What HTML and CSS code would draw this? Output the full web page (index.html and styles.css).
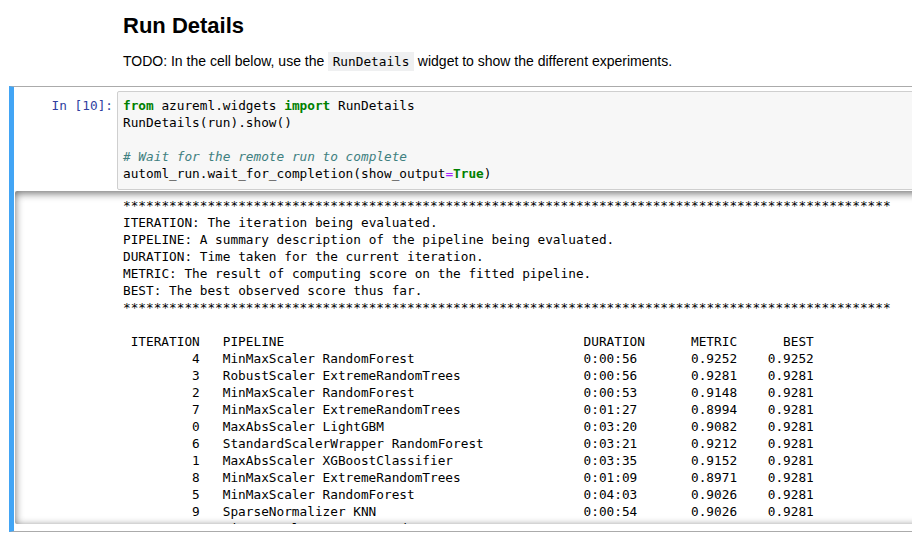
FILE: index.html
```html
<!DOCTYPE html>
<html lang="en">
<head>
<meta charset="utf-8">
<title>Run Details</title>
<link rel="stylesheet" href="styles.css">
</head>
<body>
<div class="notebook">
  <div class="text-cell">
    <h2>Run Details</h2>
    <p>TODO: In the cell below, use the <code>RunDetails</code> widget to show the different experiments.</p>
  </div>
  <div class="code-cell">
    <div class="input">
      <div class="prompt">In&nbsp;[10]:</div>
      <pre class="input-area"><span class="kw">from</span> azureml.widgets <span class="kw">import</span> RunDetails
RunDetails(run).show()

<span class="cm"># Wait for the remote run to complete</span>
automl_run.wait_for_completion(show_output<span class="op">=</span><span class="kc">True</span>)</pre>
    </div>
    <div class="output-scroll">
      <div class="output-prompt"></div>
      <div class="output-body">
<pre class="output-text">****************************************************************************************************
ITERATION: The iteration being evaluated.
PIPELINE: A summary description of the pipeline being evaluated.
DURATION: Time taken for the current iteration.
METRIC: The result of computing score on the fitted pipeline.
BEST: The best observed score thus far.
****************************************************************************************************</pre>
        <div class="results">
          <span class="c-it">ITERATION</span><span class="c-pl">PIPELINE</span><span class="c-du">DURATION</span><span class="c-me">METRIC</span><span class="c-be">BEST</span>
          <span class="c-it">4</span><span class="c-pl">MinMaxScaler RandomForest</span><span class="c-du">0:00:56</span><span class="c-me">0.9252</span><span class="c-be">0.9252</span>
          <span class="c-it">3</span><span class="c-pl">RobustScaler ExtremeRandomTrees</span><span class="c-du">0:00:56</span><span class="c-me">0.9281</span><span class="c-be">0.9281</span>
          <span class="c-it">2</span><span class="c-pl">MinMaxScaler RandomForest</span><span class="c-du">0:00:53</span><span class="c-me">0.9148</span><span class="c-be">0.9281</span>
          <span class="c-it">7</span><span class="c-pl">MinMaxScaler ExtremeRandomTrees</span><span class="c-du">0:01:27</span><span class="c-me">0.8994</span><span class="c-be">0.9281</span>
          <span class="c-it">0</span><span class="c-pl">MaxAbsScaler LightGBM</span><span class="c-du">0:03:20</span><span class="c-me">0.9082</span><span class="c-be">0.9281</span>
          <span class="c-it">6</span><span class="c-pl">StandardScalerWrapper RandomForest</span><span class="c-du">0:03:21</span><span class="c-me">0.9212</span><span class="c-be">0.9281</span>
          <span class="c-it">1</span><span class="c-pl">MaxAbsScaler XGBoostClassifier</span><span class="c-du">0:03:35</span><span class="c-me">0.9152</span><span class="c-be">0.9281</span>
          <span class="c-it">8</span><span class="c-pl">MinMaxScaler ExtremeRandomTrees</span><span class="c-du">0:01:09</span><span class="c-me">0.8971</span><span class="c-be">0.9281</span>
          <span class="c-it">5</span><span class="c-pl">MinMaxScaler RandomForest</span><span class="c-du">0:04:03</span><span class="c-me">0.9026</span><span class="c-be">0.9281</span>
          <span class="c-it">9</span><span class="c-pl">SparseNormalizer KNN</span><span class="c-du">0:00:54</span><span class="c-me">0.9026</span><span class="c-be">0.9281</span>
          <span class="c-it">10</span><span class="c-pl">MinMaxScaler ExtremeRandomTrees</span><span class="c-du">0:00:58</span><span class="c-me">0.9143</span><span class="c-be">0.9281</span>
        </div>
      </div>
    </div>
  </div>
</div>
</body>
</html>
```
FILE: styles.css
```css
html, body {
  margin: 0;
  padding: 0;
  background: #fff;
  overflow: hidden;
}
body {
  width: 912px;
  height: 534px;
  font-family: "Liberation Sans", Arial, sans-serif;
  color: #000;
}
.text-cell {
  padding: 13px 0 0 123px;
}
.text-cell h2 {
  margin: 0;
  font-size: 22px;
  line-height: 26px;
  font-weight: bold;
}
.text-cell p {
  margin: 12px 0 0;
  font-size: 14px;
  line-height: 20px;
}
.text-cell code {
  font-family: "DejaVu Sans Mono", monospace;
  font-size: 12.75px;
  background: #eff0f1;
  padding: 2px 4.5px;
}
.code-cell {
  margin: 14px 0 0 9px;
  width: 940px;
  border-top: 1px solid #ababab;
  border-bottom: 1px solid #ababab;
  border-left: 5px solid #42a5f5;
  padding: 4px 0 7px 1px;
}
.input {
  display: flex;
}
.prompt {
  width: 102px;
  flex: none;
  box-sizing: border-box;
  padding: 6px 4px 0 0;
  text-align: right;
  color: #303f9f;
  font: 12.75px/17px "DejaVu Sans Mono", monospace;
}
.input-area {
  flex: 1;
  margin: 0;
  background: #f7f7f7;
  border: 1px solid #cfcfcf;
  border-radius: 2px;
  padding: 5px 5px 7px;
  font: 12.75px/17px "DejaVu Sans Mono", monospace;
  color: #000;
}
.kw { color: #008000; font-weight: bold; }
.kc { color: #008000; font-weight: bold; }
.op { color: #aa22ff; }
.cm { color: #408080; font-style: italic; }
.output-scroll {
  margin-top: 1px;
  height: 333px;
  box-sizing: border-box;
  overflow: hidden;
  display: flex;
  border-radius: 2px;
  box-shadow: inset 0 2px 8px rgba(0, 0, 0, 0.6);
  padding-top: 6px;
}
.output-prompt {
  width: 108px;
  flex: none;
}
.output-body {
  font: 12.75px/17px "DejaVu Sans Mono", monospace;
  color: #000;
}
.output-text {
  margin: 0 0 17px;
  font: inherit;
  line-height: 17px;
}
.results {
  display: grid;
  grid-template-columns: 10ch 50ch 14ch 6ch 10ch;
  line-height: 17px;
  white-space: pre;
}
.c-it { text-align: right; }
.c-pl { padding-left: 3ch; }
.c-be { text-align: right; }
```
